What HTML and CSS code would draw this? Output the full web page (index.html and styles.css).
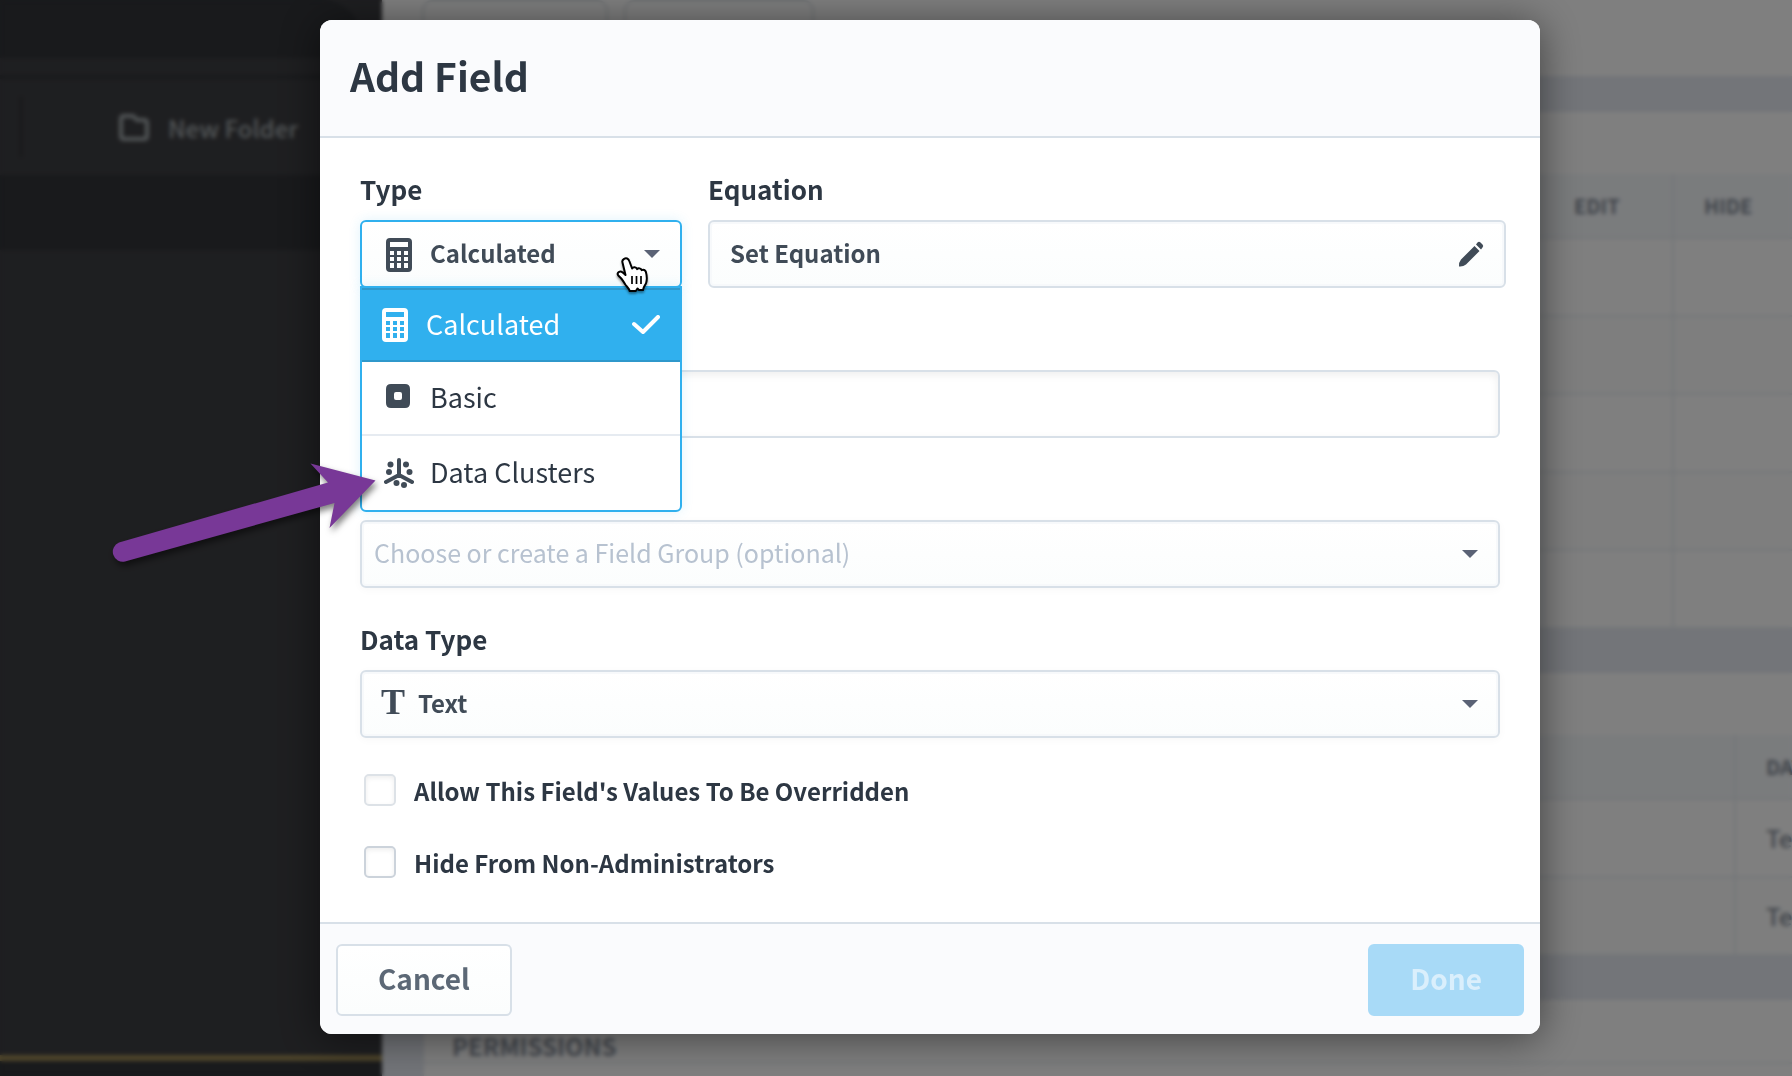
FILE: index.html
```html
<!DOCTYPE html>
<html lang="en">

<head>
    <meta charset="UTF-8">
    <meta name="viewport" content="width=device-width, initial-scale=1.0">
    <title>Add Field</title>
    <link rel="stylesheet" href="styles.css">
</head>

<body>
    <!-- page behind the dialog -->
    <div class="page" inert>
        <aside class="sidebar">
            <div class="sidebar-top"></div>
            <div class="toolbar">
                <span class="divider"></span>
                <button class="new-folder" type="button">
                    <svg width="30" height="28" viewBox="0 0 30 28"><path d="M5 3h9l4 4h7q3 0 3 3v13q0 3-3 3H5q-3 0-3-3V6q0-3 3-3z" fill="none" stroke="currentColor" stroke-width="4" stroke-linejoin="round"/></svg>
                    New Folder
                </button>
            </div>
            <div class="sidebar-band"></div>
            <div class="sidebar-list"></div>
            <div class="sidebar-foot"></div>
        </aside>
        <main class="content">
            <div class="tabs">
                <span class="tab"></span>
                <span class="tab"></span>
            </div>
            <section class="card">
                <div class="card-head"></div>
                <table class="grid">
                    <thead>
                        <tr><th></th><th class="col-edit">EDIT</th><th class="col-hide">HIDE</th></tr>
                    </thead>
                    <tbody>
                        <tr><td></td><td></td><td></td></tr>
                        <tr><td></td><td></td><td></td></tr>
                        <tr><td></td><td></td><td></td></tr>
                        <tr><td></td><td></td><td></td></tr>
                        <tr><td></td><td></td><td></td></tr>
                    </tbody>
                </table>
            </section>
            <section class="card">
                <div class="card-head"></div>
                <table class="grid">
                    <thead>
                        <tr><th></th><th class="col-data">DATA</th></tr>
                    </thead>
                    <tbody>
                        <tr><td></td><td>Text</td></tr>
                        <tr><td></td><td>Text</td></tr>
                    </tbody>
                </table>
            </section>
            <section class="card last">
                <h2 class="card-head">PERMISSIONS</h2>
            </section>
        </main>
    </div>

    <div class="overlay">
        <form class="modal" role="dialog" aria-labelledby="modal-title">
            <header class="modal-header">
                <h1 id="modal-title">Add Field</h1>
            </header>

            <div class="modal-body">
                <div class="row">
                    <div class="field type-field">
                        <label for="type">Type</label>
                        <div class="control">
                            <svg class="icon" width="26" height="34" viewBox="0 0 26 34"><path fill="currentColor" fill-rule="evenodd" d="M4 0h18q4 0 4 4v26q0 4-4 4H4q-4 0-4-4V4q0-4 4-4zM4 4v5h18V4zM4 13v4h4v-4zM11 13v4h4v-4zM18 13v4h4v-4zM4 19v4h4v-4zM11 19v4h4v-4zM18 19v4h4v-4zM4 25v5h4v-5zM11 25v5h4v-5zM18 25v5h4v-5z"/></svg>
                            <select id="type" class="open">
                                <option>Calculated</option>
                            </select>
                            <span class="caret"></span>
                            <svg class="pointer" width="34" height="40" viewBox="0 0 34 40"><path d="M8 3c2-1.400 4.500-.5 5.300 2l2.800 7.500c1-1.800 4-1.600 5 .6 1.300-1.400 3.800-.9 4.600 1 1.700-.9 3.600.1 4.200 1.800.9 3.300 1.200 7.700.3 10.800-.7 2.400-2.700 3.700-3.200 7.300h-4l-1.500-1.500-1.700 2.500h-6.200c-.5-2.700-2.600-4-4.300-6.500-2-3.300-4-6.500-6.700-8.600-2.200-2.200 0-5 2.900-4.200 1.700.5 2.900 2 4 3.300L6.500 6.500C6 5 6.500 3.800 8 3z" fill="#fff" stroke="#000" stroke-width="2" stroke-linejoin="round"/><path d="M16 20v8M20.500 20v8M25 20v8" stroke="#000" stroke-width="1.700" fill="none"/></svg>
                            <ul class="menu" role="listbox" aria-label="Type">
                                <li role="option" aria-selected="true">
                                    <svg class="icon" width="26" height="34" viewBox="0 0 26 34"><path fill="currentColor" fill-rule="evenodd" d="M4 0h18q4 0 4 4v26q0 4-4 4H4q-4 0-4-4V4q0-4 4-4zM4 4v5h18V4zM4 13v4h4v-4zM11 13v4h4v-4zM18 13v4h4v-4zM4 19v4h4v-4zM11 19v4h4v-4zM18 19v4h4v-4zM4 25v5h4v-5zM11 25v5h4v-5zM18 25v5h4v-5z"/></svg>
                                    Calculated
                                    <svg class="check" width="28" height="20" viewBox="0 0 28 20"><path d="M2 9l9 8L26 2" fill="none" stroke="currentColor" stroke-width="4" stroke-linecap="round" stroke-linejoin="round"/></svg>
                                </li>
                                <li role="option">
                                    <svg class="icon" width="28" height="30" viewBox="0 0 28 30"><path fill="currentColor" fill-rule="evenodd" d="M6 1h14q5 0 5 5v14q0 5-5 5H6q-5 0-5-5V6q0-5 5-5zM11 9q-2 0-2 2v4q0 2 2 2h4q2 0 2-2v-4q0-2-2-2z"/></svg>
                                    Basic
                                </li>
                                <li role="option">
                                    <svg class="icon" width="30" height="30" viewBox="0 0 30 30"><path d="M15 2v15M15 17L2 24M15 17l13 7" fill="none" stroke="currentColor" stroke-width="4" stroke-linecap="round"/><g fill="currentColor"><circle cx="6.500" cy="6.500" r="3"/><circle cx="22" cy="6.500" r="3"/><circle cx="5" cy="14" r="3"/><circle cx="25.500" cy="14" r="3"/><circle cx="12.500" cy="25" r="3"/><circle cx="20" cy="27" r="3"/></g></svg>
                                    Data Clusters
                                </li>
                            </ul>
                        </div>
                    </div>
                    <div class="field equation-field">
                        <label for="equation">Equation</label>
                        <button id="equation" class="equation" type="button">
                            Set Equation
                            <svg width="26" height="26" viewBox="0 0 26 26"><path fill="currentColor" d="M16.500 5l5 5L8 23.500Q5 26 1 25.500q-.5-4 2-7zM18 3.500l1.500-2q1.500-1.500 3 0l2 2q1.500 1.500 0 3l-1.500 2z"/></svg>
                        </button>
                    </div>
                </div>

                <div class="field unlabelled">
                    <input class="text-input" type="text" aria-label="Name">
                </div>

                <div class="field unlabelled">
                    <div class="control">
                        <select class="empty" aria-label="Field Group">
                            <option>Choose or create a Field Group (optional)</option>
                        </select>
                        <span class="caret"></span>
                    </div>
                </div>

                <div class="field">
                    <label for="data-type">Data Type</label>
                    <div class="control">
                        <span class="text-icon" aria-hidden="true">T</span>
                        <select id="data-type" class="data-type">
                            <option>Text</option>
                        </select>
                        <span class="caret"></span>
                    </div>
                </div>

                <label class="checkbox light"><input type="checkbox"> Allow This Field's Values To Be Overridden</label>
                <label class="checkbox"><input type="checkbox"> Hide From Non-Administrators</label>
            </div>

            <footer class="modal-footer">
                <button class="btn" type="button">Cancel</button>
                <button class="btn primary" type="submit" disabled>Done</button>
            </footer>
        </form>

        <svg class="arrow" width="300" height="140" viewBox="0 0 300 140"><path fill="#783897" d="M19 102.500L228 42.500 210.500 23.500 275.500 40.500 229.500 88 234.500 63 25 121.500A10 10 0 0 1 19 102.500z"/></svg>
    </div>
</body>

</html>
```

FILE: styles.css
```css
* {
    box-sizing: border-box;
    padding: 0;
    margin: 0;
}

body {
    min-height: 100vh;
    overflow: hidden;
    font-family: "Noto Sans CJK SC", "Open Sans", sans-serif;
    font-size: 24px;
    color: #2d3743;
    background-color: #fff;
}

button,
input,
select {
    font: inherit;
    color: inherit;
}

ul {
    list-style-type: none;
}

/* page behind the dialog */
.page {
    display: flex;
    height: 100vh;
    overflow: hidden;
}

.sidebar {
    display: flex;
    flex-direction: column;
    flex: 0 0 382px;
    background-color: #3d3e42;
}

.sidebar-top {
    height: 58px;
    margin-right: 20px;
    border-top-right-radius: 40px;
    background-color: #323438;
}

.toolbar {
    display: flex;
    align-items: center;
    height: 100px;
    margin-top: 17px;
    border-top: 4px solid #323438;
}

.divider {
    width: 2px;
    height: 60px;
    margin-left: 20px;
    background-color: #2c2e30;
}

.new-folder {
    display: flex;
    align-items: center;
    gap: 19px;
    margin-left: 97px;
    border: 0;
    background: none;
    font-weight: 500;
    color: #a4abae;
}

.sidebar-band {
    height: 75px;
    background-color: #323438;
}

.sidebar-list {
    flex: 1;
}

.sidebar-foot {
    height: 21px;
    border-top: 6px solid #9d8a55;
    background-color: #323438;
}

.content {
    flex: 1;
    min-width: 0;
    background-color: #e6eaf2;
}

.tabs {
    display: flex;
    gap: 16px;
    height: 76px;
    padding-left: 40px;
    background-color: #fff;
}

.tab {
    width: 186px;
    height: 60px;
    border: 2px solid #e0e6ea;
    border-radius: 10px;
}

.tab + .tab {
    width: 190px;
}

.card {
    margin: 36px 0 0 42px;
    background-color: #fff;
}

.card + .card {
    margin-top: 44px;
}

.card-head {
    height: 62px;
}

.last {
    height: 200px;
}

.last .card-head {
    height: 64px;
    padding: 28px 28px 0;
    border-bottom: 2px solid #eaeff3;
    font-size: 24px;
    line-height: 36px;
    color: #8b939f;
}

.grid {
    width: 100%;
    table-layout: fixed;
    border-collapse: collapse;
    border-bottom: 2px solid #eaeff3;
}

.grid th,
.grid td {
    height: 78px;
    padding-left: 30px;
    overflow: hidden;
    border-left: 2px solid #e8edf2;
    border-bottom: 2px solid #e8edf2;
    font-weight: 500;
    line-height: 30px;
    text-align: left;
    white-space: nowrap;
    color: #818995;
}

.grid th {
    height: 64px;
    font-size: 20px;
    font-weight: 700;
    background-color: #f5f8fb;
}

.grid tbody tr:nth-child(even) {
    background-color: #fcfdfd;
}

.col-edit {
    width: 130px;
}

.col-hide {
    width: 119px;
}

.col-data {
    width: 57px;
}

/* dialog */
.overlay {
    position: fixed;
    inset: 0;
    display: flex;
    align-items: flex-start;
    padding: 20px 252px 20px 320px;
    background-color: rgba(0, 0, 0, .5);
    backdrop-filter: blur(2px);
}

.modal {
    flex: 1;
    border-radius: 12px;
    background-color: #fff;
    box-shadow: 0 4px 40px rgba(0, 0, 0, .5);
}

.modal-header {
    padding: 25px 30px 31px;
    border-bottom: 2px solid #d8e0e8;
    border-radius: 12px 12px 0 0;
    background-color: #fafbfd;
}

.modal-header h1 {
    font-size: 39px;
    line-height: 60px;
    font-weight: 700;
}

.modal-body {
    padding: 32px 34px 32px 40px;
}

.row {
    display: flex;
    gap: 26px;
}

.field {
    margin: 0 6px 32px 0;
}

.field label {
    display: block;
    height: 50px;
    font-size: 26px;
    line-height: 38px;
    font-weight: 700;
}

.row .field {
    margin-right: 0;
}

.type-field {
    flex: 0 0 322px;
}

.equation-field {
    flex: 1;
}

.unlabelled {
    padding-top: 50px;
}

.control {
    position: relative;
}

.control select,
.text-input,
.equation {
    display: block;
    width: 100%;
    height: 68px;
    padding: 0 60px 4px 68px;
    border: 2px solid #d8e0e8;
    border-radius: 6px;
    appearance: none;
    font-weight: 700;
    color: #404b57;
    background: linear-gradient(#fff, #fbfdfd);
    box-shadow: inset 0 0 0 2px #f7f9fb, 0 2px 8px rgba(0, 0, 0, .03);
}

.control .open {
    border-color: #30b0ee;
    box-shadow: 0 0 12px rgba(48, 176, 238, .15);
}

.control .empty {
    padding-left: 12px;
    font-size: 25px;
    font-weight: 400;
    color: #b7c2d0;
}

.control .data-type {
    padding-left: 56px;
}

.text-input {
    padding: 0 16px;
    background: #fff;
    box-shadow: inset 0 3px 8px rgba(0, 0, 0, .07);
}

.equation {
    display: flex;
    align-items: center;
    justify-content: space-between;
    padding: 0 20px 4px;
    box-shadow: inset 0 0 0 2px #f7f9fb;
}

.equation svg {
    margin-top: 4px;
}

.caret {
    position: absolute;
    top: 30px;
    right: 22px;
    border: 8px solid transparent;
    border-top-color: #5a6275;
    border-bottom: 0;
    pointer-events: none;
}

.control > .icon {
    position: absolute;
    top: 18px;
    left: 26px;
    color: #404b57;
}

.text-icon {
    position: absolute;
    top: 12px;
    left: 21px;
    font-family: "Liberation Serif", serif;
    font-size: 36px;
    line-height: 40px;
    font-weight: 700;
    color: #404b57;
}

.pointer {
    position: absolute;
    z-index: 2;
    top: 36px;
    right: 32px;
    filter: drop-shadow(0 2px 1px rgba(0, 0, 0, .4));
}

.menu {
    position: absolute;
    z-index: 1;
    top: 66px;
    left: 0;
    width: 100%;
    border: 2px solid #30b0ee;
    border-radius: 0 0 6px 6px;
    background-color: #fff;
    box-shadow: 0 0 12px rgba(48, 176, 238, .15);
}

.menu li {
    display: flex;
    align-items: center;
    height: 74px;
    padding: 0 20px 4px 22px;
    border-bottom: 2px solid #e6ebf1;
    font-size: 27px;
}

.menu li:last-child {
    border-bottom: 0;
}

.menu li .icon {
    width: 30px;
    margin: 4px 16px 0 0;
    color: #404b57;
}

.menu li[aria-selected="true"] {
    padding-left: 18px;
    border-top: 2px solid #2f98cb;
    border-bottom-color: #2f98cb;
    color: #fff;
    background-color: #30b0ee;
}

.menu li[aria-selected="true"] .icon {
    color: #fff;
}

.menu .check {
    margin: 4px 0 0 auto;
}

.checkbox {
    display: flex;
    align-items: center;
    gap: 18px;
    height: 40px;
    margin-bottom: 32px;
    padding-left: 4px;
    font-weight: 700;
}

.checkbox:last-child {
    margin-bottom: 8px;
}

.checkbox input {
    width: 32px;
    height: 32px;
    border: 2px solid #ccd3db;
    border-radius: 5px;
    appearance: none;
    box-shadow: inset 0 2px 5px rgba(0, 0, 0, .07);
}

.checkbox.light input {
    border-color: #dde2e7;
}

.modal-footer {
    display: flex;
    justify-content: space-between;
    padding: 20px 16px 18px;
    border-top: 2px solid #d8e0e8;
    border-radius: 0 0 12px 12px;
    background-color: #fafbfd;
}

.btn {
    height: 72px;
    padding: 0 40px 4px;
    border: 2px solid #d8e0e8;
    border-radius: 6px;
    font-size: 28px;
    font-weight: 700;
    color: #5c6876;
    background: linear-gradient(#fff, #fbfdfd);
}

.btn.primary {
    border-color: #a8daf7;
    color: #daeffc;
    background: #a8daf7;
}

/* callout pointing at the last menu item */
.arrow {
    position: absolute;
    z-index: 3;
    top: 440px;
    left: 100px;
    filter: drop-shadow(2px 4px 3px rgba(0, 0, 0, .5));
}
```
